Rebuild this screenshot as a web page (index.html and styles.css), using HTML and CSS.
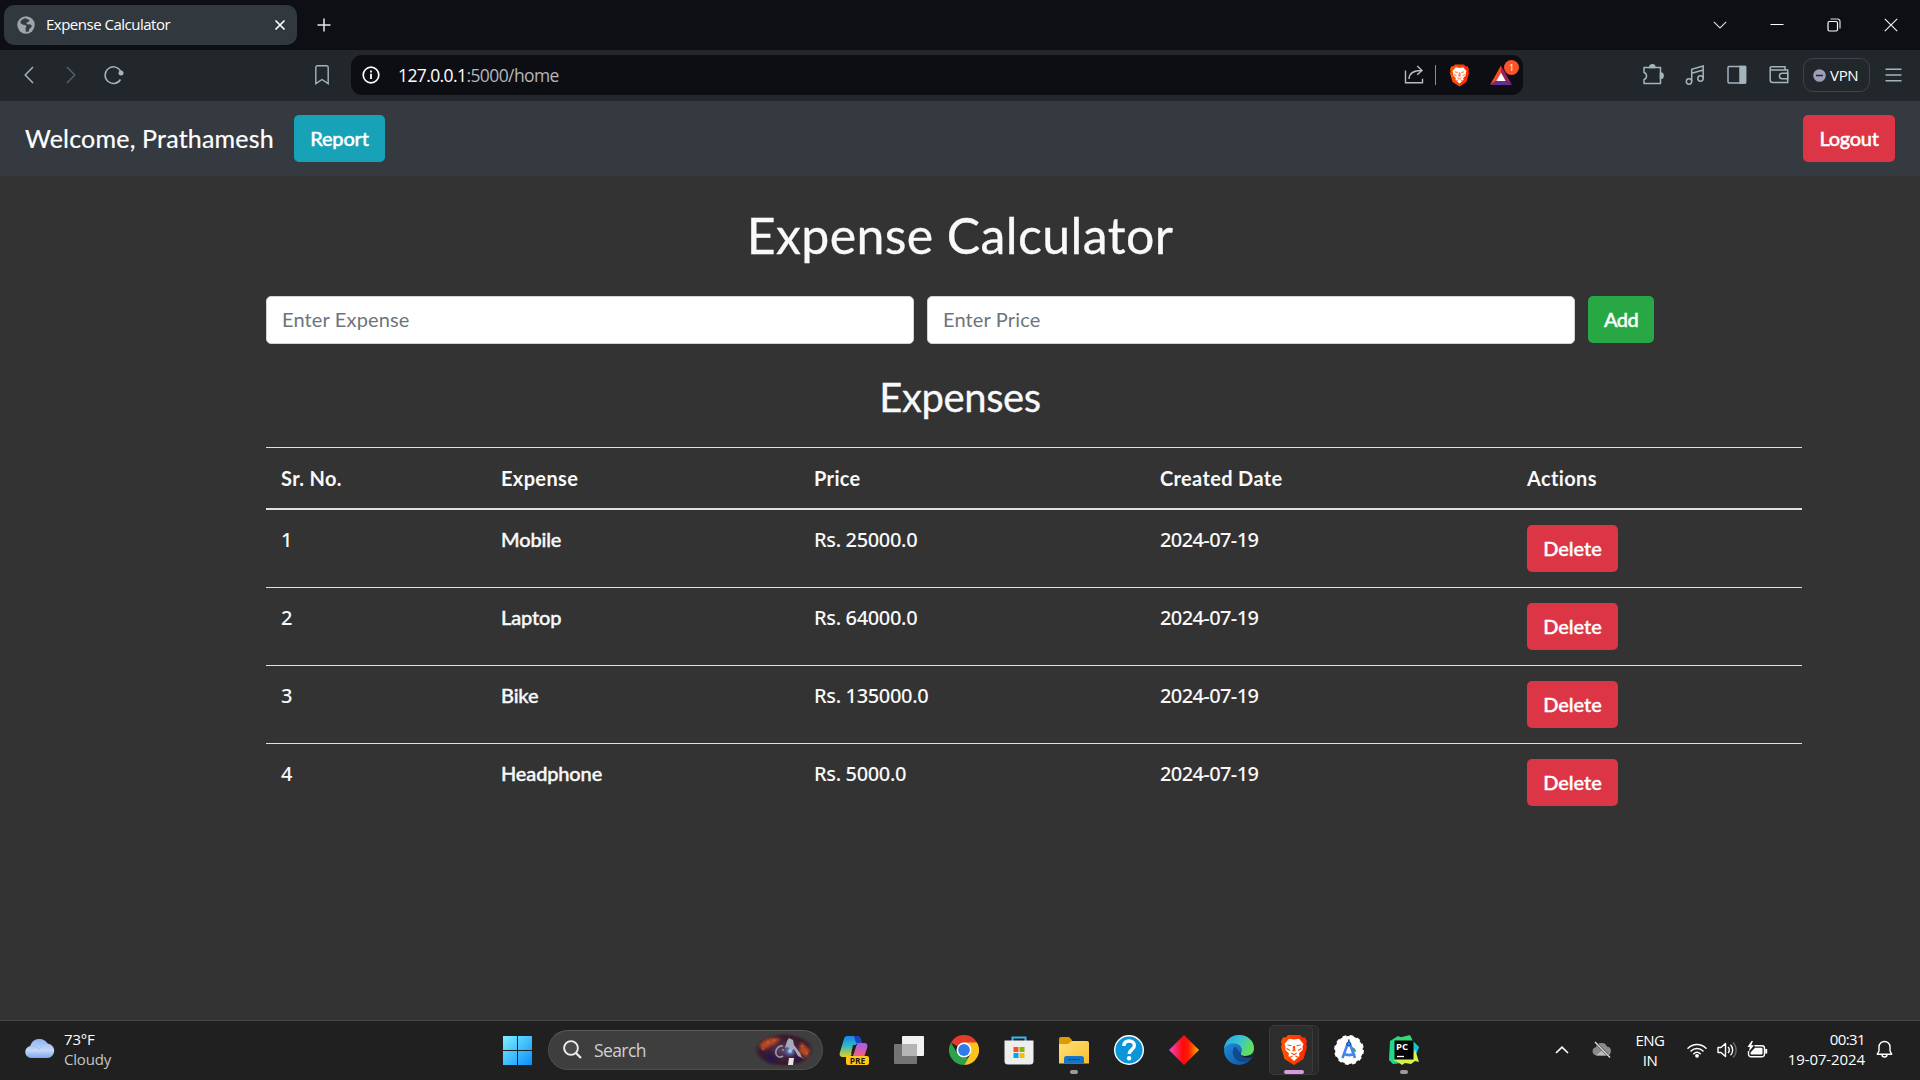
FILE: index.html
```html
<!DOCTYPE html>
<html lang="en">
<head>
<meta charset="utf-8">
<title>Expense Calculator</title>
<link rel="stylesheet" href="styles.css">
</head>
<body>
<svg class="defs" aria-hidden="true">
  <defs>
    <linearGradient id="win" x1="0" y1="0" x2="1" y2="1"><stop offset="0" stop-color="#7df0ff"/><stop offset="1" stop-color="#0a8ffb"/></linearGradient>
    <linearGradient id="brave" x1="0" y1="0" x2="1" y2="0"><stop offset="0" stop-color="#ff5500"/><stop offset="1" stop-color="#ff2600"/></linearGradient>
    <linearGradient id="folder" x1="0" y1="0" x2="1" y2="1"><stop offset="0" stop-color="#ffdf7a"/><stop offset="1" stop-color="#fbc02b"/></linearGradient>
    <linearGradient id="diamond" x1="0" y1="0" x2="1" y2="0"><stop offset="0" stop-color="#f04bd0"/><stop offset=".45" stop-color="#ff0a0a"/><stop offset=".65" stop-color="#ff1a00"/><stop offset="1" stop-color="#ffb400"/></linearGradient>
    <linearGradient id="cloud" x1="0" y1="0" x2="0" y2="1"><stop offset="0" stop-color="#8fb0f0"/><stop offset=".6" stop-color="#c4d8fa"/><stop offset="1" stop-color="#7fa6ee"/></linearGradient>
    <linearGradient id="edgeTop" x1="0" y1="0" x2="1" y2=".4"><stop offset="0" stop-color="#1fa5e0"/><stop offset=".5" stop-color="#35c1d8"/><stop offset="1" stop-color="#62e05a"/></linearGradient>
    <linearGradient id="edgeLow" x1="0" y1="0" x2="1" y2="1"><stop offset="0" stop-color="#2196e0"/><stop offset="1" stop-color="#0c4a98"/></linearGradient>
    <linearGradient id="copA" x1="0" y1="0" x2="0" y2="1"><stop offset="0" stop-color="#1b84ea"/><stop offset=".45" stop-color="#2fb6c8"/><stop offset="1" stop-color="#e8d21f"/></linearGradient>
    <linearGradient id="copB" x1="0" y1="0" x2="0" y2="1"><stop offset="0" stop-color="#a45cf0"/><stop offset="1" stop-color="#f5607a"/></linearGradient>
    <radialGradient id="nebula"><stop offset="0" stop-color="#5b4468"/><stop offset=".5" stop-color="#40203a"/><stop offset=".8" stop-color="#371a2a"/><stop offset="1" stop-color="#371a2a" stop-opacity="0"/></radialGradient>
    <filter id="soft" x="-20%" y="-20%" width="140%" height="140%"><feGaussianBlur stdDeviation="1.4"/></filter>
    <symbol id="lion" viewBox="0 0 26 30">
      <path d="M7 0h12l2.500 2.500 2.500-.2 2 4.200-.8 2.500.8 3-3.500 12L13 30 3.500 24 0 12l.8-3L0 6.500l2-4.200 2.500.2z" fill="url(#brave)"/>
      <path d="M8 3.800l5 .8 5-.8 4.500 5.200-1 2.800.2 3-3.700 3.700.5 2.500-5.500 5-5.500-5 .5-2.500-3.700-3.700.2-3-1-2.800z" fill="#fff"/>
      <path d="M6.500 10l4 .8M19.500 10l-4 .8M10.300 18l2.700 1.600 2.700-1.600M12.600 11l-.5 4.800h1.800l-.5-4.800M8.500 22.500l3-1.600M17.500 22.500l-3-1.600M5.500 13.500l3.500 2M20.500 13.500l-3.500 2" fill="none" stroke="#ff4a00" stroke-width="1.100"/>
    </symbol>
  </defs>
</svg>

<header class="tabstrip">
  <div class="tab">
    <svg width="18" height="18" viewBox="0 0 18 18"><circle cx="9" cy="9" r="8.700" fill="#a0a4ab"/><path d="M8.500 2.200c-2.500.2-4.800 2-5.300 4.600l2.800 2 2.300.3 1.200 1.400-.9 1.500.2 3.700c1 .2 2 .1 3-.2l.3-2.400 1.900-1.300.9-2.300-2.100-1.200-2.200.2-1.200-1 .6-1.300 1.900-.4.300-1.800z" fill="#343c42"/></svg>
    <span class="tab-title">Expense Calculator</span>
    <svg class="tab-close" width="12" height="12" viewBox="0 0 12 12"><path d="M1.500 1.500l9 9M10.500 1.500l-9 9" stroke="#fff" stroke-width="1.700"/></svg>
  </div>
  <svg class="new-tab" width="14" height="14" viewBox="0 0 14 14"><path d="M7 .5v13M.5 7h13" stroke="#e8e8e8" stroke-width="1.500"/></svg>
  <div class="window-controls">
    <span><svg width="14" height="8" viewBox="0 0 14 8"><path d="M.8.800L7 7 13.200.800" fill="none" stroke="#ddd" stroke-width="1.100"/></svg></span>
    <span><svg width="14" height="14" viewBox="0 0 14 14"><path d="M.5 6.500h13" stroke="#fff"/></svg></span>
    <span><svg width="14" height="14" viewBox="0 0 14 14"><rect x="1" y="3.500" width="9.500" height="9.500" rx="1.500" fill="none" stroke="#fff" stroke-width="1.200"/><path d="M3.500 1h7a2.500 2.500 0 0 1 2.500 2.500v7" fill="none" stroke="#ddd" stroke-width="1.200"/></svg></span>
    <span><svg width="14" height="14" viewBox="0 0 14 14"><path d="M.8.800l12.400 12.400M13.200.800L.8 13.200" stroke="#eee" stroke-width="1.200"/></svg></span>
  </div>
</header>

<div class="toolbar">
  <div class="nav-buttons">
    <span><svg width="10" height="18" viewBox="0 0 10 18"><path d="M9 1L1.200 9 9 17" fill="none" stroke="#a3b4bd" stroke-width="1.500"/></svg></span>
    <span><svg width="10" height="18" viewBox="0 0 10 18"><path d="M1 1l7.800 8L1 17" fill="none" stroke="#566066" stroke-width="1.500"/></svg></span>
    <span class="reload"><svg width="20" height="20" viewBox="0 0 20 20"><path d="M16.900 6.600A8.300 8.300 0 1 0 16.500 14.500" fill="none" stroke="#a3b4bd" stroke-width="1.500"/><circle cx="17" cy="8" r="2.500" fill="#a3b4bd"/></svg></span>
  </div>
  <svg class="bookmark" width="14" height="20" viewBox="0 0 14 20"><path d="M.8 2.500A1.700 1.700 0 0 1 2.500.8h9a1.700 1.700 0 0 1 1.700 1.700v16.200L7 14.500.8 18.700z" fill="none" stroke="#a3b4bd" stroke-width="1.400"/></svg>
  <div class="address">
    <svg width="18" height="18" viewBox="0 0 18 18"><circle cx="9" cy="9" r="7.800" fill="none" stroke="#fff" stroke-width="1.700"/><path d="M9 7.800v5.200M9 4.500v1.900" stroke="#fff" stroke-width="1.800"/></svg>
    <span class="url"><b>127.0.0.1</b>:5000/home</span>
    <svg class="share" width="20" height="20" viewBox="0 0 20 20"><path d="M1.500 5.500v12.300h17v-4M5 14c.2-5.500 4-8.500 12.500-8.500M13.200 1l4.800 4.500-4.800 4.300" fill="none" stroke="#b9bcc0" stroke-width="1.400"/></svg>
    <i class="divider"></i>
    <svg class="shield" width="19" height="23"><use href="#lion"/></svg>
    <div class="rewards">
      <svg width="22" height="20" viewBox="0 0 22 20"><path d="M11 .5L0 20l6.300-4L11 7.500z" fill="#ff4724"/><path d="M11 .5L22 20l-6.300-4L11 7.500z" fill="#9e1f63"/><path d="M0 20h22l-6.300-4H6.300z" fill="#662d91"/><path d="M11 7.500L6.300 16h9.400z" fill="#fff"/></svg>
      <span class="badge">1</span>
    </div>
  </div>
  <div class="tools">
    <span><svg width="22" height="22" viewBox="0 0 22 22"><path d="M2 3.500h16.500v16H2V15.500c3.400-.8 3.400-6.200 0-7z" fill="none" stroke="#a3b4bd" stroke-width="1.500" stroke-linejoin="round"/><path d="M7.600 3.500a2.500 2.500 0 0 1 5.300 0zM18.500 9a2.600 2.600 0 0 1 0 5.300z" fill="#a3b4bd" stroke="#a3b4bd"/></svg></span>
    <span><svg width="20" height="20" viewBox="0 0 20 20"><circle cx="4" cy="16.500" r="2.700"/><circle cx="15.500" cy="13.500" r="2.700"/><path d="M6.700 16.500V4.200L18.200 1v12.500M6.700 8.200l11.500-3.200"/></svg></span>
    <span><svg width="20" height="20" viewBox="0 0 20 20"><rect x="1" y="1.500" width="17.500" height="16.500" rx="1"/><path d="M13 1.500h5.500V18H13z" fill="#a3b4bd"/></svg></span>
    <span><svg width="20" height="20" viewBox="0 0 20 20"><path d="M1.200 2.800V15a2.500 2.500 0 0 0 2.500 2.500h15V5H2.700a1.500 1.500 0 0 1 0-3.300H16V5"/><path d="M18.700 8.200h-5.500a2.700 2.700 0 0 0 0 5.600h5.500z" fill="#21272a"/></svg></span>
    <div class="vpn"><svg width="13" height="13" viewBox="0 0 13 13"><circle cx="6.500" cy="6.500" r="6.300" fill="#9d9db8"/><path d="M3 6.500h7" stroke="#21272a" stroke-width="1.500"/></svg>VPN</div>
    <svg class="menu" width="17" height="14" viewBox="0 0 17 14"><path d="M.5 1.200h16M.5 7h16M.5 12.800h16"/></svg>
  </div>
</div>

<nav class="navbar">
  <span class="welcome">Welcome, Prathamesh</span>
  <a class="btn info">Report</a>
  <a class="btn danger logout">Logout</a>
</nav>

<main class="page">
  <h1>Expense Calculator</h1>
  <form class="entry">
    <input type="text" placeholder="Enter Expense">
    <input type="text" placeholder="Enter Price">
    <button type="button" class="btn success">Add</button>
  </form>
  <h2>Expenses</h2>
  <div class="table">
    <div class="row head"><span>Sr. No.</span><span>Expense</span><span>Price</span><span>Created Date</span><span>Actions</span></div>
    <div class="row"><span class="num">1</span><span class="name">Mobile</span><span class="num">Rs. 25000.0</span><span class="num date">2024-07-19</span><button class="btn danger">Delete</button></div>
    <div class="row"><span class="num">2</span><span class="name">Laptop</span><span class="num">Rs. 64000.0</span><span class="num date">2024-07-19</span><button class="btn danger">Delete</button></div>
    <div class="row"><span class="num">3</span><span class="name">Bike</span><span class="num">Rs. 135000.0</span><span class="num date">2024-07-19</span><button class="btn danger">Delete</button></div>
    <div class="row"><span class="num">4</span><span class="name">Headphone</span><span class="num">Rs. 5000.0</span><span class="num date">2024-07-19</span><button class="btn danger">Delete</button></div>
  </div>
</main>

<footer class="taskbar">
  <div class="weather">
    <svg width="30" height="20" viewBox="0 0 30 20"><path d="M6 20a6 6 0 0 1-.8-11.900A9.500 9.500 0 0 1 22.500 5.500 7.300 7.300 0 0 1 23 20z" fill="url(#cloud)"/><path d="M5.500 8.200c3.500-.8 7 .5 9 3.300 1-3.500 4-6 8-6" fill="none" stroke="#9dbaf2" stroke-width=".8"/></svg>
    <p>73°F<br><span>Cloudy</span></p>
  </div>
  <div class="center">
    <svg class="start" width="29" height="29" viewBox="0 0 29 29"><path d="M0 0h14v14H0zM15 0h14v14H15zM0 15h14v14H0zM15 15h14v14H15z" fill="url(#win)"/></svg>
    <div class="search">
      <svg width="19" height="19" viewBox="0 0 19 19"><circle cx="8" cy="8" r="6.900" fill="#4a4a4a" stroke="#f0f0f0" stroke-width="1.900"/><path d="M13 13l5 5" stroke="#f0f0f0" stroke-width="2.200"/></svg>
      <span>Search</span>
      <svg class="scene" width="60" height="34" viewBox="0 0 60 34">
        <ellipse cx="30" cy="17" rx="30" ry="17" fill="url(#nebula)"/>
        <g filter="url(#soft)"><path d="M5 13C10 5 18 3 27 6l-6 5-12 6zM47 9l9 8-3 8-8-6z" fill="#b54a24"/><path d="M10 22l9-2 5 9-8 1zM40 24l8-2-4 8z" fill="#25154a"/><circle cx="36" cy="18" r="4" fill="#5a83c4"/></g>
        <path d="M29 13c-4-1-8 3-7 8 1 3 4 4 7 2" fill="none" stroke="#9c98a8" stroke-width="1.600"/>
        <path d="M33 8l2-3 4 2 1 5 6 8 2 5-4-2-4-7-3 2-3-4-3 1z" fill="#a9a8ba"/>
        <path d="M35 25h5l-1 7h-5z" fill="#e8e4e8"/><circle cx="36" cy="18" r="2" fill="#9cc0f2"/>
        <g fill="#eac0b0"><circle cx="14" cy="9" r=".6"/><circle cx="20" cy="7" r=".6"/><circle cx="9" cy="16" r=".6"/><circle cx="48" cy="13" r=".6"/><circle cx="53" cy="20" r=".6"/><circle cx="49" cy="25" r=".6"/><circle cx="29" cy="17" r=".8"/></g>
      </svg>
    </div>
    <div class="apps">
      <span class="app copilot"><svg width="30" height="30" viewBox="0 0 30 30"><path d="M8 1h10c2 0 3 1 4 4l1 4h-6L13 18c-1 3-2 4-4 4H4c-3 0-4-2-3-5L5 4c.6-2 1.400-3 3-3z" fill="url(#copA)"/><path d="M15 1h3c2 0 3 1 4 4l1 4h-3c-2 0-3-1-4-4z" fill="#1d3fc4"/><path d="M14 10h3l-3 8-2 1z" fill="#202020"/><path d="M20 8h5c3 0 4 2 3 5l-2.500 8H14l3-9c.6-2 1.400-4 3-4z" fill="url(#copB)"/></svg><b>PRE</b></span>
      <span class="app"><svg width="30" height="30" viewBox="0 0 30 30"><rect x="8" y="1" width="22" height="20" rx="1" fill="#f2f2f2"/><rect x="0" y="9" width="23" height="20" rx="1" fill="#7c7c7c" fill-opacity=".92"/><path d="M8 9h15v12H8z" fill="#b5b5b5"/></svg></span>
      <span class="app"><svg width="30" height="30" viewBox="0 0 30 30"><path d="M15 15L2 7.500A15 15 0 0 1 28 7.500z" fill="#e33b2e"/><path d="M15 15V7.500h13A15 15 0 0 1 15 30l6.500-11.200z" fill="#fcc31e"/><path d="M2 7.500l6.500 11.200L15 22.500h4.300L15 30A15 15 0 0 1 2 7.500z" fill="#2ba24c"/><circle cx="15" cy="15" r="7.500" fill="#fff"/><circle cx="15" cy="15" r="5.900" fill="#2f7bea"/></svg></span>
      <span class="app"><svg width="30" height="30" viewBox="0 0 30 30"><path d="M8.500 6V2.500h13V6" fill="none" stroke="#35b8f1" stroke-width="2"/><path d="M.5 5.500h29V26a3.500 3.500 0 0 1-3.500 3.500H4A3.500 3.500 0 0 1 .5 26z" fill="#eee"/><path d="M9.500 12h5v5h-5z" fill="#f25022"/><path d="M15.500 12h5v5h-5z" fill="#7fba00"/><path d="M9.500 18h5v5h-5z" fill="#00a4ef"/><path d="M15.500 18h5v5h-5z" fill="#ffb900"/></svg></span>
      <span class="app open"><svg width="30" height="30" viewBox="0 0 30 30"><path d="M0 4a2 2 0 0 1 2-2h8l3 3v8H0z" fill="#dc9a05"/><path d="M0 9h9l4-3h15a2 2 0 0 1 2 2v20.500H0z" fill="url(#folder)"/><path d="M5 28.500V23.500a2.500 2.500 0 0 1 2.500-2.500h15a2.500 2.500 0 0 1 2.500 2.500v5z" fill="#1476c8"/><path d="M9 24.500h12" stroke="#0b4c92" stroke-width="1.200"/></svg></span>
      <span class="app"><svg width="30" height="30" viewBox="0 0 30 30"><circle cx="15" cy="15" r="14.300" fill="#0a96d8" stroke="#fff" stroke-width="1.400"/><path d="M9.800 11c.2-3.300 2.200-5 5.300-5 3.200 0 5.300 1.800 5.300 4.500 0 4-5.300 4.300-5.300 8.500" fill="none" stroke="#fff" stroke-width="3.400"/><circle cx="15.100" cy="23.200" r="2.200" fill="#fff"/></svg></span>
      <span class="app"><svg width="30" height="30" viewBox="0 0 30 30"><path d="M15 0l15 15-15 15L0 15z" fill="url(#diamond)"/></svg></span>
      <span class="app"><svg width="30" height="30" viewBox="0 0 30 30"><circle cx="15" cy="15" r="15" fill="url(#edgeLow)"/><path d="M0 14C1 5 7.500 0 15 0c9 0 15 6 15 13 0 5-4 8-8.500 8-3.500 0-5.500-1.500-4.500-3 2-2.500.8-8.500-6-9.500C6 8 1.500 10 0 14z" fill="url(#edgeTop)"/><path d="M11.500 11.500C6 15 9 26 18 27c4 .4 8-1.500 10.500-4.500-7 3-13-.5-12-5.500-1.800-.4-3.500-2.500-5-5.500z" fill="#11498f"/><path d="M16.500 17.500c-1 2 1 3.500 5 3.500 3 0 6-1 8.500-4l-1.700 5c-5.500 2.200-12.500.5-11.800-4.500z" fill="#202020"/></svg></span>
      <span class="app active"><svg width="26" height="30"><use href="#lion"/></svg></span>
      <span class="app"><svg width="30" height="30" viewBox="0 0 30 30"><circle cx="15" cy="15" r="13.900" fill="#fff" stroke="#fff" stroke-width="2" stroke-dasharray="4 3.300"/><path d="M17 12a5 5 0 0 1 5 5l-5-1z" fill="#2fa35c"/><path d="M14 8L8.500 23M15.500 8L21 23M9 18.500c4 2 8.500 2 12 0" fill="none" stroke="#4285f4" stroke-width="2.600"/><circle cx="14.800" cy="9" r="2" fill="#4285f4" stroke="#174a7a"/><path d="M14.800 4.500V7" stroke="#174a7a" stroke-width="1.600"/></svg></span>
      <span class="app open pycharm"><svg width="30" height="30" viewBox="0 0 30 30"><path d="M1 6l8-5 7 3-3 24-9 1L0 25z" fill="#22d88c"/><path d="M9 3l12-3 3 6 6 6-5 10H9z" fill="#2fdc74"/><path d="M23 8l7 4-4 10z" fill="#07c3f2"/><path d="M4 25l20-5 2-6 3 10 1 3-4-1-4 3-6-1-3 2-4-3z" fill="#d8f24a"/><path d="M5.500 5.500h19v19h-19z" fill="#050505"/><path d="M8 21.500h7" stroke="#fff" stroke-width="1.300"/></svg><b>PC</b></span>
    </div>
  </div>
  <div class="tray">
    <svg class="up" width="14" height="8" viewBox="0 0 14 8"><path d="M1 7l6-5.800L13 7" fill="none" stroke="#fff" stroke-width="1.600"/></svg>
    <svg class="drive" width="20" height="18" viewBox="0 0 20 18"><path d="M4.500 14.500a4.200 4.200 0 0 1-.6-8.300A6 6 0 0 1 15 5.500a4.600 4.600 0 0 1 .5 9z" fill="#8b8b8b"/><path d="M4 14.500l6-5 8 4-2 1z" fill="#bdbdbd"/><path d="M3.500 1.500L18 16.500" stroke="#202020" stroke-width="2.400"/><path d="M3 1l15 15.500" stroke="#e4e4e4" stroke-width="1.300"/></svg>
    <p class="lang">ENG<br>IN</p>
    <svg class="wifi" width="20" height="16" viewBox="0 0 20 16"><path d="M1 6.200a12.700 12.700 0 0 1 18 0M4 9a8.500 8.500 0 0 1 12 0M6.800 11.700a4.500 4.500 0 0 1 6.400 0" fill="none" stroke="#fff" stroke-width="1.500" stroke-linecap="round"/><circle cx="10" cy="13.800" r="1.900" fill="#fff"/></svg>
    <svg class="volume" width="20" height="18" viewBox="0 0 20 18"><path d="M1 6.500h3L8.500 2.500v13L4 11.500H1z" fill="none" stroke="#fff" stroke-width="1.400" stroke-linejoin="round"/><path d="M11 6a4 4 0 0 1 0 6M13.500 3.700a7.500 7.500 0 0 1 0 10.600" fill="none" stroke="#fff" stroke-width="1.400"/><path d="M16 1.500a10.500 10.500 0 0 1 0 15" fill="none" stroke="#666" stroke-width="1.400"/></svg>
    <svg class="battery" width="21" height="18" viewBox="0 0 21 18"><path d="M7.500 4.700H15a2.500 2.500 0 0 1 2.500 2.500v6a2.500 2.500 0 0 1-2.500 2.500H4a2.500 2.500 0 0 1-2.500-2.500V10" fill="none" stroke="#fff" stroke-width="1.400"/><path d="M8 6.800h6.500a1 1 0 0 1 1 1v4.800a1 1 0 0 1-1 1h-10a1 1 0 0 1-1-1V11.500zM18.200 8h2v4.500h-2z" fill="#fff"/><path d="M4.500 0L.5 6h2.300L2 10.500 7 4.300H4.200L6 0z" fill="#fff"/></svg>
    <p class="clock"><span class="time">00:31</span><br>19-07-2024</p>
    <svg class="bell" width="17" height="19" viewBox="0 0 17 19"><path d="M1.300 14.200L3 11V7a5.500 5.500 0 0 1 11 0v4l1.700 3.200zM6 14.500a2.500 2.500 0 0 0 5 0" fill="none" stroke="#fff" stroke-width="1.400" stroke-linejoin="round"/></svg>
  </div>
</footer>
</body>
</html>
```
FILE: styles.css
```css
* { box-sizing: border-box; }

body {
  margin: 0;
  width: 1920px;
  height: 1080px;
  overflow: hidden;
  display: flex;
  flex-direction: column;
  background: #333;
  color: #fff;
  font: 400 20px/30px "Open Sans", "Noto Sans", sans-serif;
}

svg { display: block; flex: none; }
p { margin: 0; }
.defs { position: absolute; width: 0; height: 0; }

/* Browser tab strip */
.tabstrip {
  height: 50px;
  flex: none;
  display: flex;
  align-items: center;
  padding-left: 4px;
  background: #0d0f14;
}
.tab {
  width: 293px;
  height: 40px;
  display: flex;
  align-items: center;
  padding: 0 11px 0 13px;
  border-radius: 10px;
  background: #32393e;
  font-size: 15px;
  letter-spacing: -.5px;
}
.tab-title { margin: 0 0 2px 11px; line-height: 20px; }
.tab-close { margin-left: auto; }
.new-tab { margin-left: 20px; }
.window-controls { display: flex; margin-left: auto; padding-right: 1px; }
.window-controls span { width: 57px; display: flex; align-items: center; justify-content: center; }

/* Browser toolbar */
.toolbar {
  height: 51px;
  flex: none;
  display: flex;
  align-items: center;
  padding-bottom: 1px;
  background: #21272a;
}
.nav-buttons { display: flex; padding-left: 8px; }
.nav-buttons span { width: 42px; height: 20px; display: flex; align-items: center; justify-content: center; }
.nav-buttons .reload { padding-left: 2px; }
.bookmark { margin-left: 181px; }
.address {
  width: 1172px;
  height: 40px;
  margin-left: 22px;
  display: flex;
  align-items: center;
  padding: 0 11px;
  border-radius: 11px;
  background: #0d0e14;
}
.url { margin: 0 0 1px 18px; font-size: 17.500px; letter-spacing: -.6px; color: #b5b6b9; }
.url b { font-weight: 400; color: #fff; }
.share { margin-left: auto; }
.divider { width: 1px; height: 20px; margin-left: 11px; background: #8a8b8e; }
.shield { margin-left: 14px; }
.rewards { position: relative; margin-left: 21px; }
.badge {
  position: absolute;
  left: 14px;
  top: -5px;
  width: 15px;
  height: 15px;
  border-radius: 50%;
  background: #fb542b;
  font-size: 9px;
  line-height: 15px;
  text-align: center;
}
.tools { display: flex; align-items: center; margin-left: 109px; }
.tools span { width: 42px; display: flex; align-items: center; justify-content: center; }
.tools span svg, .menu { fill: none; stroke: #a3b4bd; stroke-width: 1.500; }
.vpn {
  width: 67px;
  height: 34px;
  margin-left: 3px;
  display: flex;
  align-items: center;
  gap: 4px;
  padding-left: 9px;
  border: 1px solid #3b454b;
  border-radius: 10px;
  font-size: 15px;
  letter-spacing: -.3px;
}
.menu { margin-left: 15px; }

/* Application navbar */
.navbar, .page { font-family: "Lato", "Open Sans", sans-serif; }
.navbar {
  height: 75px;
  flex: none;
  display: flex;
  align-items: center;
  padding: 0 25px;
  background: #343a40;
}
.welcome { width: 269px; padding-bottom: 2px; font-size: 25px; letter-spacing: .2px; -webkit-text-stroke: .2px; }

.btn {
  height: 47px;
  padding: 7px 0 9px;
  display: block;
  border: 1px solid transparent;
  border-radius: 5px;
  color: #fff;
  font: inherit;
  font-weight: 500;
  text-align: center;
  -webkit-text-stroke: .4px;
}
.info { width: 91px; letter-spacing: -.2px; background: #17a2b8; }
.danger { width: 91px; background: #dc3545; }
.logout { width: 92px; margin-left: auto; letter-spacing: -.3px; }
.success { width: 66px; background: #28a745; letter-spacing: -.6px; }

/* Application page */
.page {
  flex: 1;
  width: 1388px;
  margin: 0 auto;
  padding-top: 29px;
  color: #f8f9fa;
}
h1, h2 { margin: 0; font-weight: 400; text-align: center; line-height: 1.200; -webkit-text-stroke: .3px; }
h1 { font-size: 50px; letter-spacing: .4px; }
h2 { font-size: 40px; letter-spacing: -.4px; margin-top: 29px; }
.entry { display: flex; gap: 13px; height: 48px; margin-top: 31px; }
.entry input {
  flex: 1;
  min-width: 0;
  height: 48px;
  padding: 7px 15px 9px;
  border: 1px solid #ced4da;
  border-radius: 5px;
  background: #fff;
  font: inherit;
  letter-spacing: .15px;
}
.entry input::placeholder { color: #6c757d; opacity: 1; }

.table { width: 1536px; margin-top: 26px; font-weight: 500; }
.row {
  height: 78px;
  display: grid;
  grid-template-columns: 220px 313px 346px 367px 1fr;
  align-items: start;
  padding: 15px 15px 0;
  border-top: 1px solid #dee2e6;
}
.row .name { margin-top: -1px; letter-spacing: -.15px; -webkit-text-stroke: .4px; }
.row .num { font-family: "Noto Sans", sans-serif; letter-spacing: -.35px; }
.row .date { letter-spacing: -.6px; }
.head { height: 63px; border-bottom: 2px solid #dee2e6; font-weight: 700; }
.head > span { letter-spacing: .35px; }
.head + .row { height: 77px; border-top: 0; }

/* Taskbar */
.taskbar {
  height: 60px;
  flex: none;
  display: flex;
  align-items: center;
  padding-bottom: 2px;
  border-top: 1px solid #474747;
  background: #202020;
  font-size: 15px;
  line-height: 20px;
}
.weather { display: flex; align-items: center; width: 503px; padding-left: 25px; gap: 9px; letter-spacing: -.2px; }
.weather svg { margin-top: -4px; }
.weather p, .clock { padding-bottom: 2px; }
.weather span { color: #c4c4c4; }
.center { display: flex; align-items: center; }
.start { margin-top: 1px; }
.search {
  width: 275px;
  height: 40px;
  margin-left: 16px;
  display: flex;
  align-items: center;
  padding: 0 8px 0 14px;
  border: 1px solid #4d4d4d;
  border-top-color: #5c5c5c;
  border-radius: 20px;
  background: #3e3e3e;
  color: #d0d0d0;
  font-size: 17.500px;
  letter-spacing: -.6px;
}
.search span { margin-left: 12px; }
.scene { margin-left: auto; }
.apps { display: flex; margin-left: 3px; }
.app { position: relative; width: 55px; height: 50px; display: flex; align-items: center; justify-content: center; }
.app svg { position: relative; }
.app b { position: absolute; line-height: 9px; font-weight: 700; }
.copilot b {
  left: 20px;
  top: 31px;
  width: 23px;
  border-radius: 2px;
  background: #ffc61a;
  color: #1c1c1c;
  font-size: 8.500px;
  text-align: center;
}
.pycharm b { left: 20px; top: 17px; font-size: 9.500px; }
.open::after, .active::after {
  content: "";
  position: absolute;
  left: 50%;
  bottom: 1px;
  width: 8px;
  height: 4px;
  margin-left: -4px;
  border-radius: 2px;
  background: #9a9a9a;
}
.active::after { width: 20px; margin-left: -10px; background: #d99be0; }
.active::before {
  content: "";
  position: absolute;
  inset: 0 8px 0 3px;
  border: 1px solid #3b3b3b;
  border-radius: 5px;
  background: #2d2d2d;
  box-shadow: 6px 0 0 -1px #292929, 6px 0 0 #363636;
}
.tray { display: flex; align-items: center; margin-left: auto; padding-right: 27px; }
.drive { margin-left: 23px; }
.lang { width: 40px; margin-left: 18px; text-align: center; letter-spacing: -.5px; }
.wifi { margin-left: 17px; }
.volume { margin-left: 10px; }
.battery { margin-left: 10px; }
.clock { width: 80px; margin-left: 17px; text-align: right; letter-spacing: -.1px; }
.clock .time { letter-spacing: -.6px; }
.bell { margin-left: 11px; }
```
